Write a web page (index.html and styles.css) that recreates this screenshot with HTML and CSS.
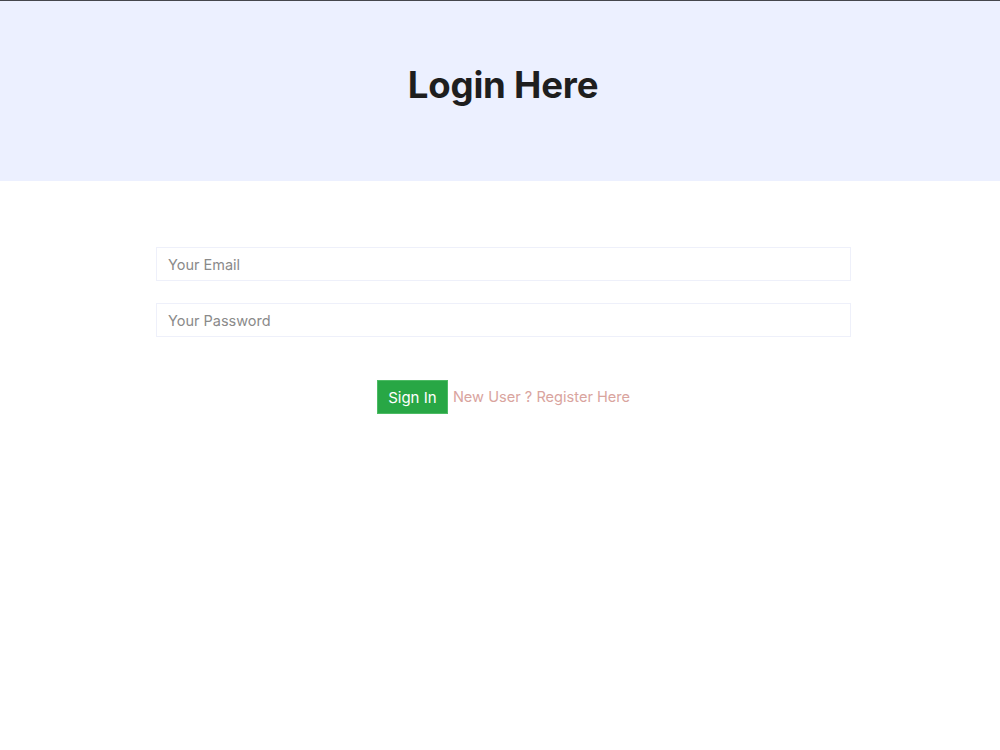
FILE: index.html
```html
<!DOCTYPE html>
<html>
<head>
<meta charset="utf-8">
<link rel="stylesheet" href="styles.css">
</head>
<body>
<div class="topline"></div>
<header class="hero">
  <h1 class="title">Login Here</h1>
</header>
<main class="content">
  <form class="form">
    <input class="field" type="email" placeholder="Your Email">
    <input class="field" type="password" placeholder="Your Password">
    <div class="actions">
      <button class="btn" type="button">Sign In</button>
      <a class="link" href="#">New User ? Register Here</a>
    </div>
  </form>
</main>
</body>
</html>
```
FILE: styles.css
```css
html, body {
  margin: 0;
  padding: 0;
  background: #ffffff;
  font-family: "Inter", "Open Sans", sans-serif;
}
.topline {
  height: 1px;
  background: #45474d;
}
.hero {
  height: 180px;
  background: #ecf0ff;
  display: flex;
  align-items: center;
  justify-content: center;
}
.title {
  margin: 0 0 12px 6px;
  font-size: 36.6px;
  font-weight: 700;
  color: #1e1e1e;
  letter-spacing: -0.2px;
}
.content {
  padding-top: 66px;
}
.form {
  width: 695px;
  margin-left: 156px;
  display: flex;
  flex-direction: column;
}
.field {
  box-sizing: border-box;
  height: 34px;
  margin: 0 0 22px 0;
  border: 1px solid #eef0fa;
  padding: 0 11px;
  font-family: inherit;
  font-size: 14.5px;
  color: #333;
  outline: none;
}
.field::placeholder {
  color: #8a8a8a;
}
.actions {
  margin-top: 21px;
  display: flex;
  align-items: center;
  justify-content: center;
  gap: 5px;
}
.btn {
  height: 34px;
  width: 71px;
  border: 1px solid #4cbb64;
  background: #28a745;
  color: #ffffff;
  font-family: inherit;
  font-size: 15px;
  padding: 0;
}
.link {
  color: #d9a49e;
  font-size: 14.6px;
  text-decoration: none;
}
```
